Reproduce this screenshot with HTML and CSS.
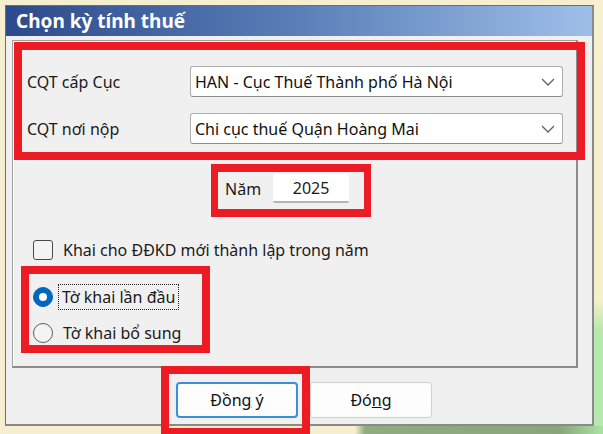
FILE: index.html
```html
<!DOCTYPE html>
<html lang="vi">
<head>
<meta charset="utf-8">
<title>Chọn kỳ tính thuế</title>
<link rel="stylesheet" href="styles.css">
</head>
<body>
<div class="backdrop">
  <div class="dialog">
    <div class="titlebar">Chọn kỳ tính thuế</div>
    <div class="body">
      <div class="group">
        <div class="form">
          <label class="lbl">CQT cấp Cục</label>
          <div class="combo"><span>HAN - Cục Thuế Thành phố Hà Nội</span>
            <svg class="chev" width="14" height="8" viewBox="0 0 14 8"><polyline points="1,1 7,7 13,1" fill="none" stroke="#606060" stroke-width="1.3"/></svg>
          </div>
          <label class="lbl">CQT nơi nộp</label>
          <div class="combo"><span>Chi cục thuế Quận Hoàng Mai</span>
            <svg class="chev" width="14" height="8" viewBox="0 0 14 8"><polyline points="1,1 7,7 13,1" fill="none" stroke="#606060" stroke-width="1.3"/></svg>
          </div>
        </div>
        <div class="year-row">
          <span class="lbl">Năm</span>
          <div class="year-input">2025</div>
        </div>
        <div class="check-row">
          <span class="checkbox"></span>
          <span class="lbl">Khai cho ĐĐKD mới thành lập trong năm</span>
        </div>
        <div class="radio-row first">
          <span class="radio checked"></span>
          <span class="lbl focus">Tờ khai lần đầu</span>
        </div>
        <div class="radio-row">
          <span class="radio"></span>
          <span class="lbl">Tờ khai bổ sung</span>
        </div>
      </div>
      <div class="buttons">
        <button class="btn default">Đồn<u>g</u> ý</button>
        <button class="btn">Đó<u>n</u>g</button>
      </div>
    </div>
  </div>
  <div class="mark m1"></div>
  <div class="mark m2"></div>
  <div class="mark m3"></div>
  <div class="mark m4"></div>
</div>
</body>
</html>
```

FILE: styles.css
```css
* { box-sizing: border-box; }
html, body { margin: 0; padding: 0; }
body {
  width: 603px;
  height: 434px;
  overflow: hidden;
  font-family: "Noto Sans", "Open Sans", sans-serif;
  font-size: 16px;
  color: #1a1a1a;
}
.backdrop {
  position: relative;
  width: 603px;
  height: 434px;
  padding: 5px 0 0 5px;
  background:
    linear-gradient(90deg, rgba(0,0,0,0) 0, rgba(0,0,0,0) 355px, #8fab80 365px, #89a67a 560px, #a7e0a0 600px) bottom / 100% 8px no-repeat,
    linear-gradient(180deg, #f6f0cf 0, #f5efcc 300px, #b6e8b0 330px) right / 10px 100% no-repeat,
    #f5efcf;
}
.dialog {
  width: 589px;
  height: 421px;
  background: #f0f0f0;
  border: 1px solid #6e6e6e;
  border-right: 2px solid #8a8a8a;
  border-bottom: 2px solid #8a8a8a;
  display: flex;
  flex-direction: column;
}
.titlebar {
  height: 30px;
  line-height: 30px;
  padding-left: 10px;
  color: #fff;
  font-weight: bold;
  font-size: 19px;
  background: linear-gradient(90deg, #2c4a8b 0%, #5a7fb8 50%, #9ebfe8 100%);
  flex: none;
}
.body {
  flex: 1;
  padding: 4px 0 0 6px;
}
.group {
  width: 566px;
  height: 328px;
  border: 1px solid #a0a0a0;
  border-right: 2px solid #8c8c8c;
  border-bottom: 2px solid #8c8c8c;
  box-shadow: inset 1px 1px 0 #fff;
  padding: 25px 0 0 14px;
}
.form {
  display: grid;
  grid-template-columns: 163px 373px;
  row-gap: 16px;
  align-items: center;
}
.lbl { white-space: nowrap; }
.combo {
  height: 31px;
  background: #fff;
  border: 1px solid #adadad;
  border-bottom-color: #8d8d8d;
  border-radius: 3px;
  display: flex;
  align-items: center;
  justify-content: space-between;
  padding: 0 7px 0 4px;
  color: #111;
}
.chev { flex: none; }
.year-row {
  display: flex;
  align-items: center;
  margin: 30px 0 0 198px;
  height: 29px;
}
.year-input {
  margin-left: 12px;
  width: 76px;
  height: 29px;
  background: #fff;
  border-bottom: 2px solid #b4b4b4;
  border-radius: 2px;
  text-align: center;
  line-height: 28px;
}
.check-row {
  display: flex;
  align-items: center;
  margin: 37px 0 0 6px;
  height: 20px;
}
.checkbox {
  width: 20px;
  height: 20px;
  border: 1px solid #4a4a4a;
  border-radius: 3px;
  background: #f4f4f4;
  margin-right: 10px;
  flex: none;
}
.radio-row {
  display: flex;
  align-items: center;
  margin-left: 6px;
  height: 24px;
  margin-top: 12px;
}
.radio-row.first { margin-top: 25px; }
.radio {
  width: 20px;
  height: 20px;
  border-radius: 50%;
  border: 1px solid #5c5c5c;
  background: #f4f4f4;
  margin-right: 10px;
  flex: none;
  position: relative;
}
.radio.checked {
  background: #0067c0;
  border-color: #0067c0;
}
.radio.checked::after {
  content: "";
  position: absolute;
  left: 5px;
  top: 5px;
  width: 8px;
  height: 8px;
  border-radius: 50%;
  background: #fff;
}
.focus {
  outline: 1px dotted #222;
  outline-offset: 0;
  padding: 1px 3px;
  margin-left: -4px;
}
.buttons {
  display: flex;
  gap: 12px;
  margin: 14px 0 0 164px;
}
.btn {
  width: 122px;
  height: 36px;
  background: #fdfdfd;
  border: 1px solid #d0d0d0;
  border-radius: 4px;
  font-family: inherit;
  font-size: 16px;
  color: #111;
  padding: 0;
}
.btn.default {
  border: 2px solid #3b8ed8;
}
.mark {
  position: absolute;
  border: 8px solid #ed1c24;
}
.m1 { left: 14px; top: 42px; width: 571px; height: 118px; }
.m2 { left: 211px; top: 164px; width: 160px; height: 53px; border-width: 8px 7px; }
.m3 { left: 21px; top: 266px; width: 189px; height: 87px; }
.m4 { left: 161px; top: 366px; width: 149px; height: 70px; }
```
